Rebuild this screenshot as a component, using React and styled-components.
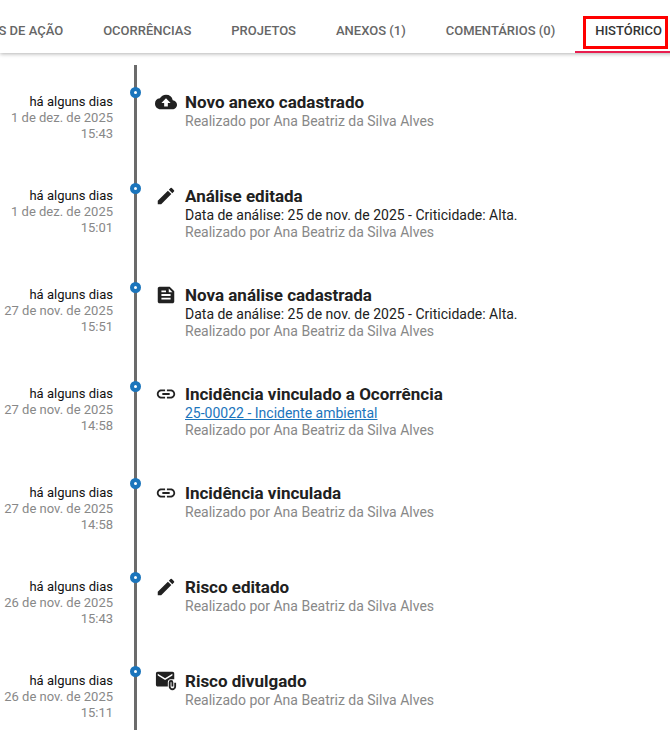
import React, { useState } from "react";
import styled, { createGlobalStyle } from "styled-components";
import {
  MdAttachEmail,
  MdBackup,
  MdEdit,
  MdFeed,
  MdLink,
} from "react-icons/md";

const tabs = [
  "Planos de ação",
  "Ocorrências",
  "Projetos",
  "Anexos (1)",
  "Comentários (0)",
  "Histórico",
];

const author = "Ana Beatriz da Silva Alves";

const events = [
  {
    date: "1 de dez. de 2025",
    time: "15:43",
    icon: MdBackup,
    title: "Novo anexo cadastrado",
  },
  {
    date: "1 de dez. de 2025",
    time: "15:01",
    icon: MdEdit,
    title: "Análise editada",
    detail: "Data de análise: 25 de nov. de 2025 - Criticidade: Alta.",
  },
  {
    date: "27 de nov. de 2025",
    time: "15:51",
    icon: MdFeed,
    title: "Nova análise cadastrada",
    detail: "Data de análise: 25 de nov. de 2025 - Criticidade: Alta.",
  },
  {
    date: "27 de nov. de 2025",
    time: "14:58",
    icon: MdLink,
    title: "Incidência vinculado a Ocorrência",
    link: "25-00022 - Incidente ambiental",
  },
  {
    date: "27 de nov. de 2025",
    time: "14:58",
    icon: MdLink,
    title: "Incidência vinculada",
  },
  {
    date: "26 de nov. de 2025",
    time: "15:43",
    icon: MdEdit,
    title: "Risco editado",
  },
  {
    date: "26 de nov. de 2025",
    time: "15:11",
    icon: MdAttachEmail,
    title: "Risco divulgado",
  },
];

const App = () => {
  const [active, setActive] = useState("Histórico");

  return (
    <Page>
      <GlobalStyle />
      <TabBar role="tablist">
        {tabs.map((tab) => (
          <Tab
            key={tab}
            type="button"
            role="tab"
            aria-selected={tab === active}
            $active={tab === active}
            onClick={() => setActive(tab)}
          >
            {tab}
            {tab === active && <Highlight />}
          </Tab>
        ))}
      </TabBar>

      <Timeline>
        {events.map(({ date, time, icon: Icon, title, detail, link }, i) => (
          <Event key={i}>
            <When>
              <Ago>há alguns dias</Ago>
              <div>{date}</div>
              <div>{time}</div>
            </When>
            <Rail>
              <Dot $raised={!(detail || link)} />
            </Rail>
            <IconSlot>
              <Icon size={22} />
            </IconSlot>
            <Content>
              <Title>{title}</Title>
              {detail && <div>{detail}</div>}
              {link && <DetailLink href="#ocorrencia">{link}</DetailLink>}
              <Author>Realizado por {author}</Author>
            </Content>
          </Event>
        ))}
      </Timeline>
    </Page>
  );
};

const GlobalStyle = createGlobalStyle`
  * {
    box-sizing: border-box;
  }

  body {
    margin: 0;
    background: #fff;
    color: #212121;
    font-family: Roboto, "Liberation Sans", sans-serif;
  }
`;

const Page = styled.main`
  overflow: hidden;
`;

const TabBar = styled.div`
  display: flex;
  justify-content: flex-end;
  height: 53px;
  padding-top: 10px;
  margin-right: -12px;
  background: #fff;
  box-shadow: 0 1px 4px rgba(0, 0, 0, 0.3);
`;

const Tab = styled.button`
  position: relative;
  flex: none;
  padding: 0 20px;
  border: none;
  border-bottom: 2px solid ${(p) => (p.$active ? "#e91e4f" : "transparent")};
  background: transparent;
  color: ${(p) => (p.$active ? "#333" : "#666")};
  font-family: inherit;
  font-size: 13px;
  font-weight: 500;
  text-transform: uppercase;
  white-space: nowrap;
  cursor: pointer;
`;

/* Red frame around the current tab */
const Highlight = styled.span`
  position: absolute;
  inset: 6px 14px 2px 8px;
  border: 3px solid #f00;
`;

const Timeline = styled.ol`
  margin: 12px 0 0;
  padding: 0;
  list-style: none;
`;

const Event = styled.li`
  display: grid;
  grid-template-columns: 113px 45px 27px 1fr;
`;

const When = styled.div`
  padding: 29px 0 17px;
  color: #888;
  font-size: 13px;
  line-height: 16px;
  text-align: right;
  white-space: nowrap;

  li:last-child > & {
    padding-bottom: 9px;
  }
`;

const Ago = styled.div`
  color: #111;
`;

const Rail = styled.div`
  display: flex;
  justify-content: center;
  background: linear-gradient(#6b6b6b, #6b6b6b) center / 3px 100% no-repeat;
`;

const Dot = styled.span`
  width: 11px;
  height: 11px;
  margin-top: ${(p) => (p.$raised ? 22 : 24)}px;
  border: 4px solid #1b75bc;
  border-radius: 50%;
  background: #fff;
`;

const IconSlot = styled.div`
  margin-left: -3px;
  padding-top: 26px;
  line-height: 0;
`;

const Content = styled.div`
  padding: 27px 0 17px;
  font-size: 14px;
  line-height: 17px;

  li:last-child > & {
    padding-bottom: 0;
  }
`;

const Title = styled.h2`
  margin: 0;
  font-size: 17px;
  font-weight: 700;
  line-height: 21px;
`;

const DetailLink = styled.a`
  display: table;
  color: #1b75bc;
`;

const Author = styled.div`
  color: #888;
`;

export default App;
